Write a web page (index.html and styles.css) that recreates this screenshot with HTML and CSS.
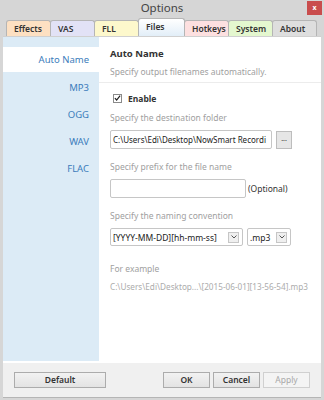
FILE: index.html
```html
<!DOCTYPE html>
<html lang="en">
<head>
  <meta charset="UTF-8" />
  <title>Options</title>
  <link rel="stylesheet" href="styles.css">
</head>
<body>
  <div class="window">
    <!-- Title bar -->
    <div class="titlebar">
      <span></span>
      <div class="title">Options</div>
      <div class="close">x</div>
    </div>

    <div class="client">
      <!-- Tabs -->
      <div class="tabs">
        <div class="tab tab-effects">Effects</div>
        <div class="tab tab-vas">VAS</div>
        <div class="tab tab-fll">FLL</div>
        <div class="tab tab-files active">Files</div>
        <div class="tab tab-hotkeys">Hotkeys</div>
        <div class="tab tab-system">System</div>
        <div class="tab tab-about">About</div>
      </div>

      <!-- Panel -->
      <div class="panel">
        <div class="sidebar">
          <div class="side-item selected">Auto Name</div>
          <div class="side-item">MP3</div>
          <div class="side-item">OGG</div>
          <div class="side-item">WAV</div>
          <div class="side-item">FLAC</div>
        </div>

        <div class="content">
          <div class="head">
            <h3>Auto Name</h3>
            <p>Specify output filenames automatically.</p>
          </div>

          <div class="form">
            <label class="check">
              <span class="box"><svg width="8" height="8" viewBox="0 0 8 8"><path d="M1 4.2 L3 6.3 L7 1.2" fill="none" stroke="#222" stroke-width="1.4"/></svg></span>
              <span>Enable</span>
            </label>

            <div class="label first">Specify the destination folder</div>
            <div class="row">
              <div class="input wide">C:\Users\Edi\Desktop\NowSmart Recordi</div>
              <div class="btn-small">...</div>
            </div>

            <div class="label">Specify prefix for the file name</div>
            <div class="row">
              <div class="input prefix"></div>
              <span class="optional">(Optional)</span>
            </div>

            <div class="label">Specify the naming convention</div>
            <div class="row">
              <div class="select pattern">
                <span>[YYYY-MM-DD][hh-mm-ss]</span>
                <span class="arrow"><svg width="6" height="4" viewBox="0 0 6 4"><path d="M0.5 0.5 L3 3 L5.5 0.5" fill="none" stroke="#555" stroke-width="1"/></svg></span>
              </div>
              <div class="select ext">
                <span>.mp3</span>
                <span class="arrow"><svg width="6" height="4" viewBox="0 0 6 4"><path d="M0.5 0.5 L3 3 L5.5 0.5" fill="none" stroke="#555" stroke-width="1"/></svg></span>
              </div>
            </div>

            <div class="label example-title">For example</div>
            <div class="example">C:\Users\Edi\Desktop...\[2015-06-01][13-56-54].mp3</div>
          </div>
        </div>
      </div>

      <!-- Footer buttons -->
      <div class="footer">
        <div class="button default">Default</div>
        <div class="spacer"></div>
        <div class="button">OK</div>
        <div class="button">Cancel</div>
        <div class="button disabled">Apply</div>
      </div>
    </div>
  </div>
</body>
</html>
```
FILE: styles.css
```css
* {
  margin: 0;
  padding: 0;
  box-sizing: border-box;
}

body {
  font-family: 'Noto Sans', 'Open Sans', sans-serif;
  font-size: 8.5px;
  color: #333;
  background: #d6d6d6;
  width: 324px;
  height: 400px;
  overflow: hidden;
}

.window {
  display: flex;
  flex-direction: column;
  height: 400px;
}

.titlebar {
  height: 18px;
  display: grid;
  grid-template-columns: 1fr auto 1fr;
  align-items: start;
}

.title {
  font-size: 11.5px;
  color: #444;
  line-height: 16px;
}

.close {
  justify-self: end;
  margin: 1px 2px 0 0;
  width: 15px;
  height: 14px;
  background: #c94d4d;
  color: #fff;
  font-size: 7px;
  font-weight: bold;
  text-align: center;
  line-height: 13px;
}

.client {
  flex: 1;
  display: flex;
  flex-direction: column;
  margin: 0 3px 2px;
  background: #f0f0f0;
}

/* Tabs */
.tabs {
  display: flex;
  align-items: flex-end;
  height: 18px;
  padding-left: 3px;
  background: #d6d6d6;
}

.tab {
  width: 45px;
  height: 16px;
  padding-left: 7px;
  line-height: 15px;
  font-weight: 600;
  color: #333;
  border: 1px solid #b5b5b5;
  border-bottom: none;
  border-radius: 3px 3px 0 0;
  margin-right: -1px;
}

.tab-effects { background: #fde0c2; }
.tab-vas { background: #e2e2f6; }
.tab-fll { background: #fdf8cc; }
.tab-hotkeys { background: #fde0e0; }
.tab-system { background: #e4f7cf; }
.tab-about { background: #dedede; }

.tab.active {
  height: 18px;
  width: 47px;
  line-height: 15px;
  background: linear-gradient(#ffffff, #e2eef8);
  position: relative;
  z-index: 1;
}

/* Panel */
.panel {
  flex: 1;
  display: flex;
  background: #fff;
  border-top: 1px solid #d0d0d0;
}

.sidebar {
  width: 96px;
  background: #dcebf6;
  padding-top: 10px;
  margin-bottom: 2px;
}

.side-item {
  height: 27px;
  line-height: 27px;
  text-align: right;
  padding-right: 10px;
  color: #3b7cbb;
  font-size: 9.5px;
}

.side-item.selected {
  background: #fff;
  height: 25px;
  line-height: 25px;
  margin-bottom: 2px;
}

.content {
  flex: 1;
}

.head {
  padding: 11px 0 4px 11px;
  border-bottom: 1px solid #ececec;
}

.head h3 {
  font-size: 9.5px;
  font-weight: bold;
  color: #333;
  line-height: 12px;
}

.head p {
  margin-top: 6px;
  color: #a0a0a0;
  line-height: 12px;
}

.form {
  padding: 8px 0 0 11px;
}

.check {
  display: flex;
  align-items: center;
  gap: 6px;
  font-weight: bold;
  padding-left: 3px;
  height: 14px;
}

.box {
  width: 9px;
  height: 9px;
  border: 1px solid #8a8a8a;
  display: flex;
  align-items: center;
  justify-content: center;
}

.label {
  color: #a0a0a0;
  margin-top: 12px;
  height: 12px;
  line-height: 12px;
}

.label.first {
  margin-top: 7px;
}

.row {
  display: flex;
  align-items: center;
  gap: 4px;
  margin-top: 6px;
}

.input {
  height: 19px;
  border: 1px solid #c6c6c6;
  border-radius: 2px;
  background: #fff;
  padding-left: 2px;
  line-height: 17px;
  color: #222;
  white-space: nowrap;
  overflow: hidden;
}

.input.wide {
  width: 162px;
  font-size: 8px;
}

.input.prefix { width: 136px; }

.btn-small {
  width: 16px;
  height: 18px;
  border: 1px solid #bdbdbd;
  background: #e6e6e6;
  font-size: 7px;
  text-align: center;
  line-height: 14px;
}

.optional {
  margin-left: -2px;
  color: #333;
}

.select {
  height: 18px;
  display: flex;
  align-items: center;
  justify-content: space-between;
  border: 1px solid #c6c6c6;
  border-radius: 2px;
  padding: 0 3px 0 2px;
  color: #222;
}

.select.pattern { width: 133px; }
.select.ext { width: 44px; }

.arrow {
  width: 11px;
  height: 11px;
  border: 1px solid #c6c6c6;
  background: #efefef;
  display: flex;
  align-items: center;
  justify-content: center;
}

.example-title {
  margin-top: 17px;
}

.example {
  margin-top: 6px;
  color: #acacac;
  font-size: 8.2px;
  white-space: nowrap;
}

/* Footer */
.footer {
  height: 35px;
  display: flex;
  align-items: center;
  padding: 0 11px 0 11px;
  gap: 3px;
  border-bottom: 1px solid #b5b5b5;
}

.spacer {
  flex: 1;
}

.button {
  width: 47px;
  height: 16px;
  border: 1px solid #acacac;
  background: linear-gradient(#f2f2f2, #e3e3e3);
  text-align: center;
  line-height: 14px;
  font-weight: 600;
  color: #333;
}

.button.default {
  width: 92px;
}

.button.disabled {
  color: #a8a8a8;
  border-color: #d0d0d0;
  background: #f4f4f4;
  font-weight: normal;
}
```
